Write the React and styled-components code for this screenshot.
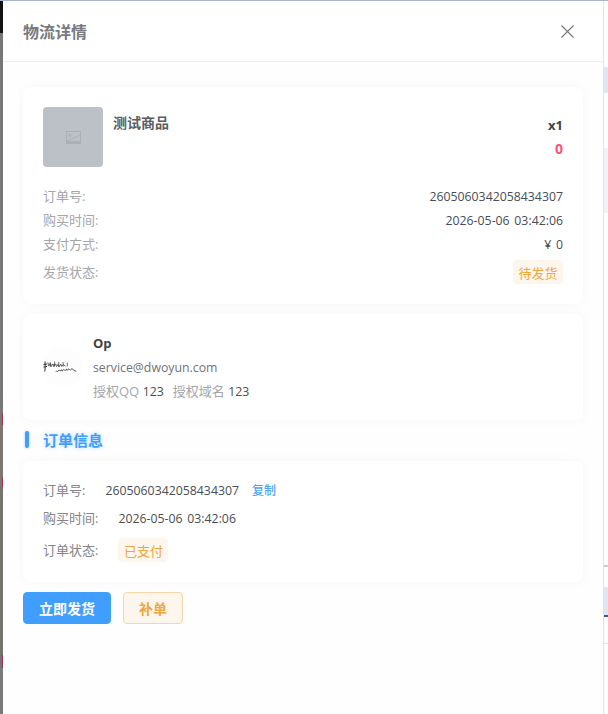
import React from 'react';
import styled, { createGlobalStyle } from 'styled-components';

const GlobalStyle = createGlobalStyle`
  html, body {
    margin: 0;
    height: 100%;
    overflow: hidden;
    background: #fff;
  }
  #root {
    height: 100%;
  }
  * {
    box-sizing: border-box;
  }
`;

const Page = styled.div`
  display: flex;
  height: 714px;
  border-top: 1px solid #a9b5d0;
  font-family: 'Open Sans', 'Noto Sans CJK SC', sans-serif;
  font-size: 13px;
  color: #4a4d52;
`;

/* what shows of the page behind the drawer */
const BackdropLeft = styled.div`
  width: 3px;
  flex: none;
  background:
    linear-gradient(
      to bottom,
      transparent 412px,
      #a62c5a 412px,
      #a62c5a 424px,
      transparent 424px,
      transparent 476px,
      #a62c5a 476px,
      #a62c5a 486px,
      transparent 486px,
      transparent 654px,
      #a62c5a 654px,
      #a62c5a 667px,
      transparent 667px
    ) right top / 1px 100% no-repeat,
    linear-gradient(
      to bottom,
      #101214 0,
      #101214 32px,
      #777 32px,
      #777 412px,
      #7c776f 412px,
      #7c776f 486px,
      #73746d 486px,
      #73746d 667px,
      #7a7a7a 667px
    );
`;

const BackdropRight = styled.div`
  width: 5px;
  flex: none;
  border-left: 1px solid #dfe3f3;
  background: linear-gradient(
    to bottom,
    #fff 0,
    #fff 66px,
    #e2e5f1 66px,
    #e2e5f1 92px,
    #fff 92px,
    #fff 147px,
    #f2f1f6 147px,
    #f2f1f6 212px,
    #fff 212px,
    #fff 564px,
    #c9cbd4 564px,
    #c9cbd4 566px,
    #fff 566px,
    #fff 586px,
    #e2e5f1 586px,
    #e2e5f1 614px,
    #3c5a9c 614px,
    #3c5a9c 616px,
    #fdfcff 616px,
    #fdfcff 642px,
    #dfe3f3 642px,
    #dfe3f3 643px,
    #fdfcff 643px
  );
`;

const Drawer = styled.div`
  flex: 1;
  min-width: 0;
  display: flex;
  flex-direction: column;
  background: #fefefe;
`;

const Header = styled.div`
  height: 61px;
  flex: none;
  display: flex;
  align-items: center;
  justify-content: space-between;
  padding: 0 29px 0 20px;
  background: #fff;
  border-bottom: 1px solid #eeeeee;
`;

const Title = styled.div`
  font-size: 16px;
  font-weight: 700;
  color: #777a7e;
`;

const CloseButton = styled.div`
  display: flex;
  margin-top: 1px;
  color: #74777c;
`;

const Body = styled.div`
  display: flex;
  flex-direction: column;
  padding: 25px 20px 0;
`;

const Card = styled.div`
  background: #fff;
  border-radius: 8px;
  box-shadow: 0 0 12px rgba(0, 0, 0, 0.035);
  padding: ${(p) => p.$pad || '20px'};
  margin-bottom: 10px;
`;

const GoodsRow = styled.div`
  display: flex;
  height: 60px;
  margin-bottom: 17px;
`;

const Thumb = styled.div`
  width: 60px;
  height: 60px;
  flex: none;
  display: flex;
  align-items: center;
  justify-content: center;
  background: #bcc1c8;
  border-radius: 4px;
  color: #abb0b7;
`;

const GoodsName = styled.div`
  flex: 1;
  margin: 6px 0 0 10px;
  font-size: 14px;
  line-height: 20px;
  font-weight: 700;
  color: #5a5c60;
`;

const GoodsSide = styled.div`
  display: flex;
  flex-direction: column;
  align-items: flex-end;
  padding-top: 8px;
  font-weight: 700;
`;

const Qty = styled.div`
  font-size: 13px;
  line-height: 20px;
  color: #3f4246;
`;

const Price = styled.div`
  margin-top: 4px;
  font-size: 14px;
  line-height: 20px;
  color: #fb5376;
`;

const InfoRow = styled.div`
  display: flex;
  align-items: center;
  justify-content: space-between;
  min-height: ${(p) => p.$h || '24px'};
`;

const Muted = styled.span`
  color: #a4a6a9;
`;

const InfoLabel = styled(Muted)`
  margin-top: -2px;
`;

const Value = styled.span`
  font-size: 12.3px;
  word-spacing: 1.5px;
  color: ${(p) => p.$color || '#4a4d52'};
`;

const Tag = styled.span`
  display: inline-flex;
  align-items: center;
  justify-content: center;
  width: 50px;
  height: 24px;
  background: #fdf6ec;
  border-radius: 4px;
  color: #eea63f;
`;

const OwnerCard = styled(Card)`
  display: flex;
  align-items: center;
  height: 106px;
  padding: 0 20px;
`;

const Avatar = styled.div`
  width: 40px;
  height: 40px;
  flex: none;
  margin-right: 10px;
  border-radius: 50%;
  background: #fdfdfd;
  display: flex;
  align-items: center;
  justify-content: center;
`;

const OwnerLines = styled.div`
  display: flex;
  flex-direction: column;
`;

const OwnerLine = styled.div`
  line-height: 24px;
  font-weight: ${(p) => (p.$bold ? 700 : 400)};
  color: ${(p) => p.$color || '#4a4d52'};

  &:last-child {
    line-height: 22px;
  }
`;

const Spaced = styled.span`
  margin-left: 9px;
`;

const SectionTitle = styled.div`
  display: flex;
  align-items: center;
  height: 17px;
  margin: 1px 0 13px 2px;
  font-size: 15px;
  font-weight: 700;
  color: #409eff;
  text-shadow: 0 0 4px rgba(64, 158, 255, 0.35);
`;

const SectionBar = styled.span`
  width: 4px;
  height: 17px;
  margin-right: 14px;
  border-radius: 2px;
  background: #409eff;
  box-shadow: 0 0 3px rgba(64, 158, 255, 0.5);
`;

const DetailRow = styled.div`
  display: flex;
  align-items: center;
  height: ${(p) => p.$h || '28px'};
`;

const DetailLabel = styled.span`
  color: #838588;
  margin: -2px 20px 0 0;
`;

const CopyLink = styled.span`
  margin-left: 13px;
  font-size: 12px;
  font-weight: 500;
  color: #4ba3fb;
`;

const Actions = styled.div`
  display: flex;
  gap: 12px;
`;

const Button = styled.div`
  display: flex;
  align-items: center;
  justify-content: center;
  height: 32px;
  width: ${(p) => p.$w};
  border-radius: 4px;
  font-size: 14px;
  font-weight: 700;
  color: ${(p) => (p.$warn ? '#eea63f' : '#fff')};
  background: ${(p) => (p.$warn ? '#fdf6ec' : '#409eff')};
  border: 1px solid ${(p) => (p.$warn ? '#f5d7a8' : '#409eff')};
`;

const ImageIcon = () => (
  <svg width="15" height="13" viewBox="0 0 15 13" fill="none" stroke="currentColor" strokeWidth="1">
    <rect x="0.5" y="0.5" width="14" height="12" />
    <circle cx="4" cy="4" r="1.1" />
    <path d="M1 9.5c2.5 0 3.5-1 5-2s3-.8 4-1.3 2.5-1.7 4-2.2" />
    <path d="M1 11h13" strokeWidth="2" />
  </svg>
);

const CloseIcon = () => (
  <svg width="13" height="13" viewBox="0 0 13 13" fill="none" stroke="currentColor" strokeWidth="1.1">
    <path d="M.5.5l12 12M12.5.5l-12 12" />
  </svg>
);

// brush scribble from the shop's avatar
const SignatureLogo = () => (
  <svg width="40" height="16" viewBox="0 0 40 16" fill="none" stroke="#2e2e2e" strokeWidth="0.9">
    <path d="M2 2.5c0 3 .5 7-.3 10M.5 5.5l3.5-.5M.5 8l3.5-.5" strokeWidth="1" />
    <g transform="translate(0.5 1.5) scale(0.85 1)">
      <path d="M5 2c1 1 .2 3 1 3.5s1-3 2-2.5.2 3 1 3 1.2-3 2.2-2.5.2 3 1 2.5 1-3 2-2.5.3 2.5 1.2 2.5 1-2.5 2-2 .2 2.4 1.2 2 1-2.5 2-2 .4 2.2 1.2 1.8 1.2-2 2.2-1.4.8 1.6 1.8 1.2" />
      <path d="M8 1.5v5M13 1v5M18 1.5v5M23 1.5v4.5M28 2v4" strokeWidth="0.7" />
    </g>
    <path d="M13 12.5c.8-1.5 1.2.8 2-.2s1-2 1.8-.8.8.4 1.6-.6.2 1.4 1.2.8 1-1.8 1.8-.8.8.6 1.6-.4.4 1.2 1.2.8 1-2 2-1 .8 1 1.8.2 1-1.4 1.8-.2 2 1.6 3.4 1.8" />
  </svg>
);

const App = () => {
  return (
    <>
      <GlobalStyle />
      <Page>
        <BackdropLeft />
        <Drawer>
          <Header>
            <Title>物流详情</Title>
            <CloseButton>
              <CloseIcon />
            </CloseButton>
          </Header>
          <Body>
            <Card $pad="20px 20px 16px">
              <GoodsRow>
                <Thumb>
                  <ImageIcon />
                </Thumb>
                <GoodsName>测试商品</GoodsName>
                <GoodsSide>
                  <Qty>x1</Qty>
                  <Price>0</Price>
                </GoodsSide>
              </GoodsRow>
              <InfoRow>
                <InfoLabel>订单号:</InfoLabel>
                <Value>2605060342058434307</Value>
              </InfoRow>
              <InfoRow>
                <InfoLabel>购买时间:</InfoLabel>
                <Value>2026-05-06 03:42:06</Value>
              </InfoRow>
              <InfoRow>
                <InfoLabel>支付方式:</InfoLabel>
                <Value>¥ 0</Value>
              </InfoRow>
              <InfoRow $h="32px">
                <InfoLabel>发货状态:</InfoLabel>
                <Tag>待发货</Tag>
              </InfoRow>
            </Card>
            <OwnerCard>
              <Avatar>
                <SignatureLogo />
              </Avatar>
              <OwnerLines>
                <OwnerLine $bold $color="#3f4246">Op</OwnerLine>
                <OwnerLine>
                  <Value $color="#6f7276">service@dwoyun.com</Value>
                </OwnerLine>
                <OwnerLine>
                  <Muted>授权QQ</Muted> <Value>123</Value>
                  <Spaced>
                    <Muted>授权域名</Muted> <Value>123</Value>
                  </Spaced>
                </OwnerLine>
              </OwnerLines>
            </OwnerCard>
            <SectionTitle>
              <SectionBar />
              订单信息
            </SectionTitle>
            <Card $pad="15px 20px 14px">
              <DetailRow>
                <DetailLabel>订单号:</DetailLabel>
                <Value>2605060342058434307</Value>
                <CopyLink>复制</CopyLink>
              </DetailRow>
              <DetailRow>
                <DetailLabel>购买时间:</DetailLabel>
                <Value>2026-05-06 03:42:06</Value>
              </DetailRow>
              <DetailRow $h="36px">
                <DetailLabel>订单状态:</DetailLabel>
                <Tag>已支付</Tag>
              </DetailRow>
            </Card>
            <Actions>
              <Button $w="88px">立即发货</Button>
              <Button $w="60px" $warn>补单</Button>
            </Actions>
          </Body>
        </Drawer>
        <BackdropRight />
      </Page>
    </>
  );
};

export default App;
